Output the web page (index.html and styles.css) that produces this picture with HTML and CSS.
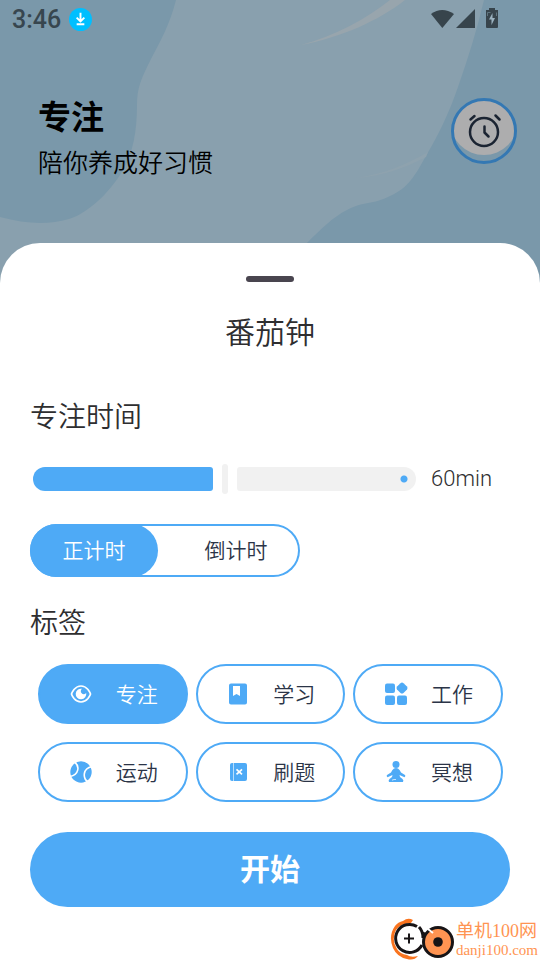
FILE: index.html
```html
<!DOCTYPE html>
<html lang="zh-CN">
<head>
<meta charset="utf-8">
<meta name="viewport" content="width=device-width, initial-scale=1">
<title>番茄钟</title>
<link rel="stylesheet" href="styles.css">
</head>
<body>
<svg class="backdrop" viewBox="0 0 540 300" preserveAspectRatio="none" aria-hidden="true">
  <rect width="540" height="300" fill="#89a0ae"/>
  <path fill="#7a98aa" d="M0 0H176C170 24 160 42 151 59C141 79 137 88 137 105C137 131 133 153 123 170C108 196 84 215 69 219C48 225 26 224 0 217Z"/>
  <path fill="#7a98aa" d="M484 0C477 30 468 58 458 87C449 113 439 134 427 154C415 176 408 188 390 196C373 205 363 201 347 210C333 217 321 229 307 243L300 300H540V0Z"/>
  <path fill="#98a5ad" d="M301 45C335 36 366 19 390 0H405C378 21 342 37 301 45Z"/>
  <path fill="#8ea2ae" d="M356 178C384 174 405 165 428 152L426 157C405 168 382 176 356 178Z"/>
</svg>

<header class="top">
  <div class="status">
    <span class="clock">3:46</span>
    <svg class="download" viewBox="0 0 24 24" aria-hidden="true">
      <circle cx="12" cy="12" r="12" fill="#00bfff"/>
      <path d="M12 5v8M8 10l4 4 4-4M8 17h8" fill="none" stroke="#fff" stroke-width="2"/>
    </svg>
    <svg class="signals" viewBox="0 0 70 22" aria-hidden="true" fill="#37444c">
      <path d="M1 6Q12-2 24 6L12.300 20Z"/>
      <path d="M26 20L45 1V20Z"/>
      <path d="M56 2h3V0h6v2h3v17q0 1-1 1H57q-1 0-1-1Z"/>
      <path d="M62.500 5L59 11.500h2.500V17l3.500-7h-2.500Z" fill="#9bb2c0"/>
      <path d="M57.500 8V4.500h3M66.500 8V4.500" stroke="#5f747f" fill="none"/>
    </svg>
  </div>
  <div class="hero">
    <div>
      <h1>专注</h1>
      <p>陪你养成好习惯</p>
    </div>
    <button class="alarm" type="button" aria-label="闹钟">
      <svg viewBox="0 0 66 66" aria-hidden="true">
        <clipPath id="dial"><circle cx="33" cy="33" r="31"/></clipPath>
        <circle cx="33" cy="23" r="34" fill="#adadae" clip-path="url(#dial)"/>
        <circle cx="33" cy="33" r="31.500" fill="none" stroke="#3478b3" stroke-width="3"/>
        <g fill="none" stroke="#1b2432" stroke-width="2.500" stroke-linecap="round" stroke-linejoin="round">
          <circle cx="33" cy="34" r="14"/>
          <path d="M33.500 28.500v6l4 4M19.500 21.500l4-3.500M44.500 17.500l4 4"/>
        </g>
      </svg>
    </button>
  </div>
</header>

<main class="sheet">
  <div class="handle"></div>
  <h2 class="title">番茄钟</h2>

  <label class="heading" for="minutes">专注时间</label>
  <div class="duration">
    <div class="slider">
      <span class="filled"></span>
      <span class="rest"></span>
      <input id="minutes" type="range" min="0" max="120" value="60">
    </div>
    <output for="minutes">60min</output>
  </div>

  <div class="modes" role="radiogroup" aria-label="计时方式">
    <label class="mode"><input type="radio" name="mode" checked><span>正计时</span></label>
    <label class="mode"><input type="radio" name="mode"><span>倒计时</span></label>
  </div>

  <h3 class="heading">标签</h3>
  <div class="tags" role="radiogroup" aria-label="标签">
    <label class="tag"><input type="radio" name="tag" checked>
      <svg viewBox="0 0 24 24" aria-hidden="true">
        <path d="M2.500 12C3 10 4 9 5 7.500Q8 4 12 4T19 7.500C20 9 21 10 21.500 12C21 14 20 15 19 16.500Q16 20 12 20T5 16.500C4 15 3 14 2.500 12Z" fill="none" stroke="currentColor" stroke-width="1.700"/>
        <path d="M13 6.800A5.300 5.300 0 1 0 17.200 11A3 3 0 1 1 13 6.800Z" fill="currentColor"/>
      </svg><span>专注</span></label>
    <label class="tag"><input type="radio" name="tag">
      <svg viewBox="0 0 24 24" aria-hidden="true">
        <path fill="currentColor" fill-rule="evenodd" d="M4 1.500H18Q20 1.500 20 3.500V20.500Q20 22.500 18 22.500H4Q2 22.500 2 20.500V3.500Q2 1.500 4 1.500ZM6 4V14L9.500 12L13 14V4Z"/>
      </svg><span>学习</span></label>
    <label class="tag"><input type="radio" name="tag">
      <svg viewBox="0 0 24 24" aria-hidden="true" fill="currentColor">
        <rect x="1" y="1.500" width="10" height="9.500" rx="2"/><rect x="1" y="13.500" width="10" height="9.500" rx="2"/><rect x="13" y="13.500" width="10" height="9.500" rx="2"/>
        <path d="M16.500 1.200Q18 0 19.500 1.200L23 4.500Q24 6 23 7.500L19.500 11Q18 12.200 16.500 11L13 7.500Q12 6 13 4.500Z"/>
      </svg><span>工作</span></label>
    <label class="tag"><input type="radio" name="tag">
      <svg viewBox="0 0 24 24" aria-hidden="true">
        <circle cx="12" cy="12" r="10.700" fill="currentColor"/>
        <path d="M5.500 2C11 6 10 15 1 16.500M23 6.500C13.500 8.500 13.500 18 19 22" fill="none" stroke="#fff" stroke-width="1.600"/>
      </svg><span>运动</span></label>
    <label class="tag"><input type="radio" name="tag">
      <svg viewBox="0 0 24 24" aria-hidden="true">
        <rect x="3" y="3" width="17" height="18" rx="2" fill="currentColor"/>
        <path d="M6.500 3v18" stroke="#b9defb" stroke-width="1"/>
        <path d="M9.500 9.300l5.500 5M15 9.300l-5.500 5" stroke="#fff" stroke-width="1.700"/>
      </svg><span>刷题</span></label>
    <label class="tag"><input type="radio" name="tag">
      <svg viewBox="0 0 24 24" aria-hidden="true" fill="currentColor">
        <circle cx="12" cy="4.500" r="3.500"/>
        <path d="M10 8.500Q12 7.500 14 8.500Q16 10 17 12.500L21 15Q22 16 20.500 17.300L15.500 15L16 17L18.500 19Q20 20.500 19 22H5Q4 20.500 5.500 19L8 17L8.500 15L3.500 17.300Q2 16 3 15L7 12.500Q8 10 10 8.500Z"/>
        <path d="M8 20.200l2-.7h2" fill="none" stroke="#fff" stroke-width="0.700"/>
      </svg><span>冥想</span></label>
  </div>

  <button class="start" type="button"><span>开始</span></button>
</main>

<aside class="mark">
  <svg viewBox="0 0 64 44" aria-hidden="true" fill="none">
    <path d="M13 5Q18 1 23 4L21 7Q11 7 6 14Q1 24 7 33Q10 38 17 39Q21 42 28 40Q24 45 17 43Q7 41 3 32Q-2 20 5 10Q8 6 13 5Z" fill="#f9741f"/>
    <path d="M27 10.500A14 14 0 1 0 32 29" stroke="#171416" stroke-width="3"/>
    <path d="M29 11Q33 15 33 22M32 17L37 19" stroke="#171416" stroke-width="3"/>
    <circle cx="48" cy="26" r="14.500" fill="#ff9452" stroke="#171416" stroke-width="3"/>
    <path d="M38 13l5 4" stroke="#fff" stroke-width="2"/>
    <circle cx="48" cy="26" r="4.800" fill="#171416"/>
    <path d="M14 22.500h10M19 17.500v10" stroke="#171416" stroke-width="2"/>
  </svg>
  <div class="mark-text"><strong>单机100网</strong><span>danji100.com</span></div>
</aside>
</body>
</html>
```
FILE: styles.css
```css
:root {
  --blue: #4eaaf6;
  --ink: #2b3447;
}

* { box-sizing: border-box; }

body {
  margin: 0;
  min-height: 100vh;
  display: flex;
  flex-direction: column;
  position: relative;
  background: #7a98aa;
  color: #2e2e30;
  font-family: Roboto, "Noto Sans CJK SC", sans-serif;
}

h1, h2, h3, p { margin: 0; }

button, input { font: inherit; }

.backdrop {
  position: absolute;
  top: 0;
  left: 0;
  width: 100%;
  height: 300px;
}

.top { position: relative; }

.status {
  display: flex;
  align-items: center;
  height: 38px;
  padding: 0 40px 0 12px;
}

.clock {
  font-size: 25px;
  font-weight: 500;
  line-height: 38px;
  padding-top: 2px;
  color: #37464f;
}

.download {
  width: 23px;
  height: 23px;
  margin-left: 8px;
}

.signals {
  width: 70px;
  height: 22px;
  margin-left: auto;
}

.hero {
  display: flex;
  justify-content: space-between;
  align-items: flex-start;
  height: 205px;
  padding: 58px 23px 0 38px;
  color: #000;
}

.hero h1 {
  font-size: 33px;
  font-weight: 700;
  line-height: 44px;
}

.hero p {
  font-size: 25px;
  font-weight: 350;
  line-height: 48px;
}

.alarm {
  width: 66px;
  height: 66px;
  margin-top: 2px;
  padding: 0;
  border: 0;
  background: none;
}

.alarm svg { display: block; }

.sheet {
  position: relative;
  flex: 1;
  padding: 33px 30px 53px;
  border-radius: 40px 40px 0 0;
  background: #fff;
}

.handle {
  width: 48px;
  height: 6px;
  margin: 0 auto;
  border-radius: 3px;
  background: #49454f;
}

.title {
  margin-top: 29px;
  font-size: 30px;
  font-weight: 350;
  line-height: 44px;
  text-align: center;
}

.heading {
  display: block;
  font-size: 28px;
  font-weight: 350;
  line-height: 40px;
}

label.heading { margin-top: 43px; }

h3.heading { margin-top: 27px; }

.duration {
  display: flex;
  align-items: center;
  gap: 15px;
  margin-top: 26px;
  padding: 0 18px 0 3px;
}

.slider {
  position: relative;
  flex: 1;
  display: flex;
  align-items: center;
  gap: 24px;
  height: 30px;
}

.filled, .rest {
  flex: 1;
  height: 24px;
}

.filled {
  border-radius: 12px 3px 3px 12px;
  background: var(--blue);
}

.rest {
  border-radius: 3px 12px 12px 3px;
  background: radial-gradient(circle at calc(100% - 12px) 50%, var(--blue) 3px, #f1f1f1 4px);
}

.slider input {
  position: absolute;
  inset: 0;
  width: 100%;
  height: 30px;
  margin: 0;
  appearance: none;
  background: none;
}

.slider input::-webkit-slider-thumb {
  appearance: none;
  width: 6px;
  height: 30px;
  border-radius: 3px;
  background: #f1f1f1;
}

.duration output {
  font-size: 22px;
  font-weight: 300;
  line-height: 30px;
}

.modes {
  display: flex;
  justify-content: space-between;
  width: 270px;
  height: 53px;
  margin-top: 30px;
  border-radius: 27px;
  box-shadow: inset 0 0 0 2px var(--blue);
}

.mode {
  display: flex;
  align-items: center;
  justify-content: center;
  width: 128px;
  border-radius: 27px;
  font-size: 21px;
  font-weight: 350;
  color: var(--ink);
}

.mode span, .tag span, .start span {
  display: block;
  padding-bottom: 3px;
}

.mode input, .tag input {
  position: absolute;
  opacity: 0;
}

.mode:has(:checked), .tag:has(:checked) {
  background: var(--blue);
  color: #fff;
}

.tags {
  display: grid;
  grid-template-columns: repeat(3, 1fr);
  gap: 18px 8px;
  margin-top: 20px;
  padding: 0 7px 0 8px;
}

.tag {
  display: flex;
  align-items: center;
  justify-content: space-between;
  height: 60px;
  padding: 0 28px 0 29px;
  border: 2px solid var(--blue);
  border-radius: 30px;
  font-size: 21px;
  font-weight: 350;
  color: var(--ink);
}

.tag svg {
  width: 24px;
  height: 24px;
  color: var(--blue);
}

.tag:has(:checked) svg { color: #fff; }

.start {
  display: block;
  width: 100%;
  height: 75px;
  margin-top: 30px;
  border: 0;
  border-radius: 38px;
  background: var(--blue);
  color: #fff;
  font-size: 30px;
  font-weight: 700;
}

.start span { padding-bottom: 6px; }

.mark {
  position: absolute;
  right: 2px;
  bottom: 0;
  display: flex;
  gap: 2px;
  color: #ff9452;
}

.mark svg {
  width: 64px;
  height: 44px;
}

.mark-text {
  display: flex;
  flex-direction: column;
  padding-top: 4px;
  font-family: "Liberation Serif", "Noto Sans CJK SC", serif;
}

.mark-text strong {
  font-size: 18px;
  font-weight: 400;
  line-height: 22px;
}

.mark-text span {
  font-size: 15px;
  line-height: 16px;
}
```
